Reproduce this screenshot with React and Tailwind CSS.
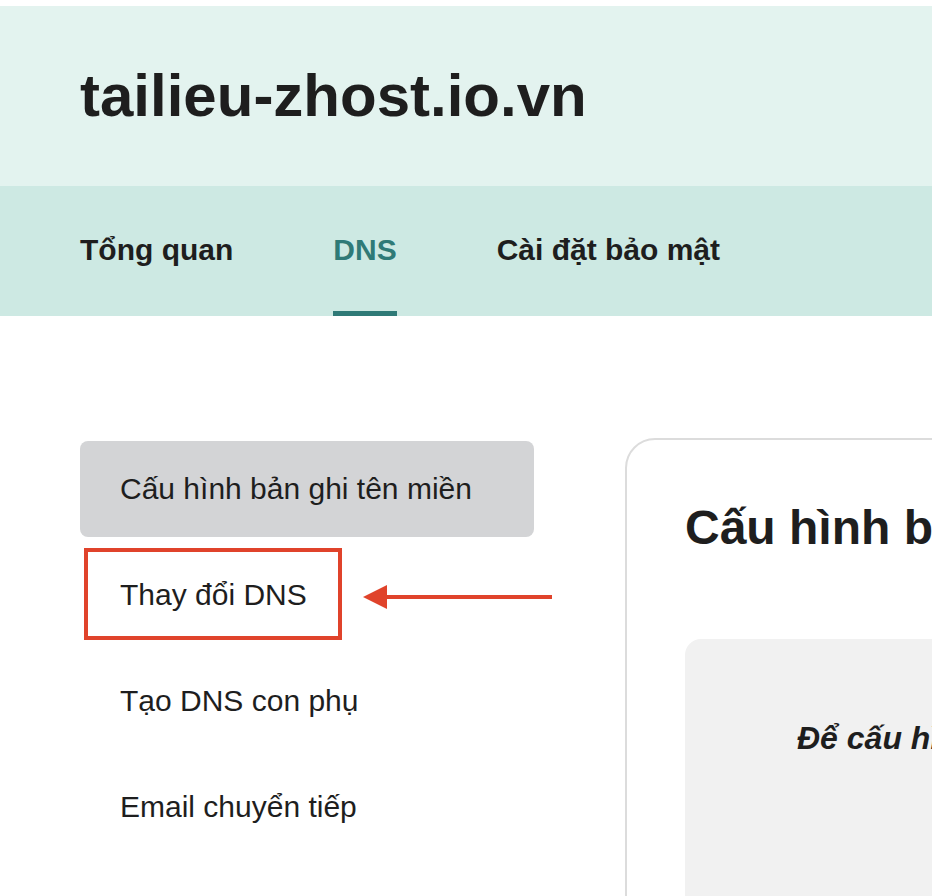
import React from 'react';

const tabs = [
  { label: 'Tổng quan', active: false },
  { label: 'DNS', active: true },
  { label: 'Cài đặt bảo mật', active: false },
];

const menu = ['Cấu hình bản ghi tên miền', 'Thay đổi DNS', 'Tạo DNS con phụ', 'Email chuyển tiếp'];

export default function App() {
  return (
    <div className="w-full min-h-screen overflow-hidden bg-white text-[#1e1e1e] font-['Liberation_Sans',Arial,sans-serif]">
      <div className="h-[6px] bg-white" />
      {/* header */}
      <div className="h-[180px] bg-[#e3f3ef] flex items-center px-[80px]">
        <h1 className="text-[60px] leading-[60px] font-bold">tailieu-zhost.io.vn</h1>
      </div>
      {/* tabs */}
      <div className="h-[130px] bg-[#cde9e3] flex gap-[100px] px-[80px]">
        {tabs.map((t) => (
          <div
            key={t.label}
            className={`h-full pt-[49px] border-b-[5px] text-[30px] leading-[30px] font-bold whitespace-nowrap ${t.active ? 'border-[#2f7a77] text-[#2f7a77]' : 'border-transparent'}`}
          >
            {t.label}
          </div>
        ))}
      </div>

      {/* main */}
      <div className="flex items-start gap-[91px] pl-[80px] pt-[122px]">
        <div className="w-[454px] shrink-0 mt-[3px] flex flex-col gap-[10px]">
          {menu.map((m, i) => (
            <div
              key={m}
              className={`relative h-[96px] flex items-center pl-[40px] text-[30px] leading-[34px] whitespace-nowrap rounded-lg ${i === 0 ? 'bg-[#d3d4d6]' : ''}`}
            >
              {m}
              {i === 1 && (
                <>
                  <div className="absolute left-[4px] top-[1px] w-[258px] h-[92px] border-[4px] border-[#e0432b]" />
                  <svg className="absolute left-[283px] top-[37px]" width="190" height="26" viewBox="0 0 190 26">
                    <line x1="20" y1="13" x2="189" y2="13" stroke="#e0432b" strokeWidth="4" />
                    <polygon points="0,13 24,1 24,25" fill="#e0432b" />
                  </svg>
                </>
              )}
            </div>
          ))}
        </div>

        <div className="w-[800px] shrink-0 min-h-[600px] rounded-[30px] border-2 border-[#dcdcdc] pl-[58px] pt-[64px]">
          <h2 className="text-[48px] leading-[48px] font-bold whitespace-nowrap">Cấu hình bản ghi tên miền</h2>
          <div className="mt-[87px] h-[400px] rounded-2xl bg-[#f1f1f1] pl-[112px] pt-[83px]">
            <p className="text-[32px] leading-[32px] font-bold italic whitespace-nowrap">Để cấu hình bản ghi, vui lòng chọn</p>
          </div>
        </div>
      </div>
    </div>
  );
}
